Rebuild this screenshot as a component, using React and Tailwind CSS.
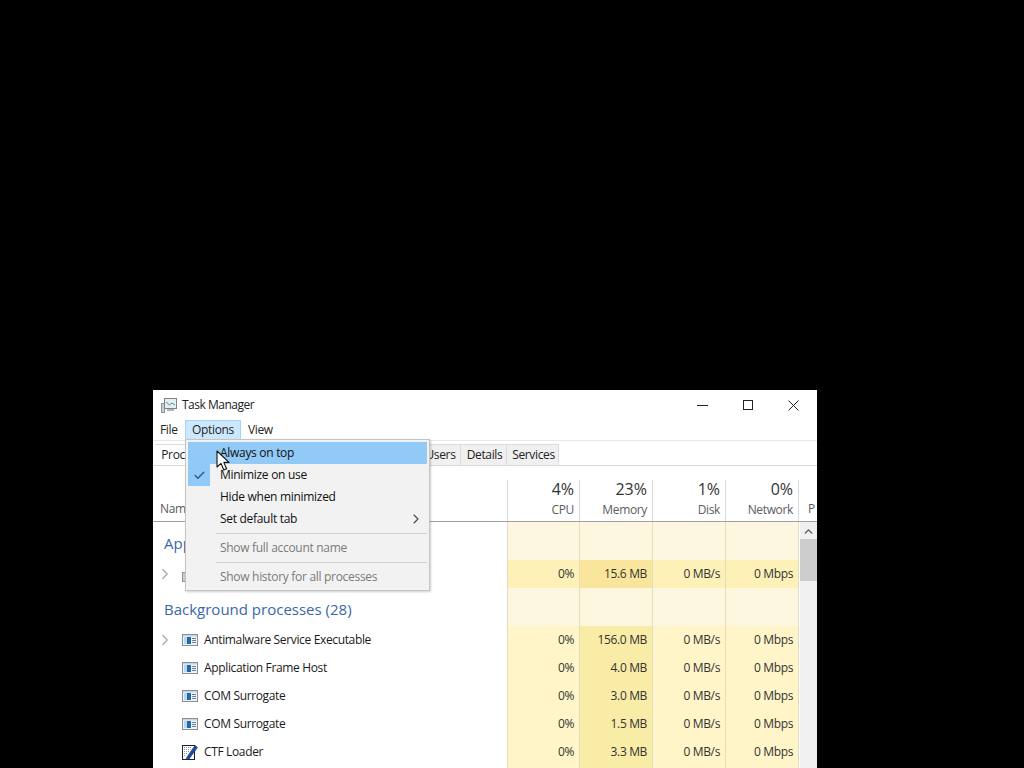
import React from 'react'
import { ChevronRight, ChevronUp, Check } from 'lucide-react'

const font = 'font-["Open_Sans","Noto_Sans",sans-serif]'

const tabs = [
  { label: 'Processes', width: 'w-[64px]' },
  { label: 'Performance', width: 'w-[78px]' },
  { label: 'App history', width: 'w-[70px]' },
  { label: 'Startup', width: 'w-[52px]' },
  { label: 'Users', width: 'w-[42px]' },
  { label: 'Details', width: 'w-[46px]' },
  { label: 'Services', width: 'w-[52px]' },
]

const columns = [
  { pct: '4%', name: 'CPU' },
  { pct: '23%', name: 'Memory' },
  { pct: '1%', name: 'Disk' },
  { pct: '0%', name: 'Network' },
]

const background = [
  { name: 'Antimalware Service Executable', mem: '156.0 MB', expand: true },
  { name: 'Application Frame Host', mem: '4.0 MB' },
  { name: 'COM Surrogate', mem: '3.0 MB' },
  { name: 'COM Surrogate', mem: '1.5 MB' },
  { name: 'CTF Loader', mem: '3.3 MB', icon: 'ctf' },
]

const AppIcon = () => (
  <svg width="16" height="12" viewBox="0 0 16 12" className="shrink-0">
    <rect x="0.5" y="0.5" width="15" height="11" fill="#eef3f8" stroke="#8b8f94" />
    <rect x="1" y="1" width="14" height="1.5" fill="#c7d3df" />
    <rect x="2" y="3" width="3" height="7" fill="#bcd6ec" />
    <rect x="5" y="3" width="4" height="7" fill="#1f6aa8" />
    <path d="M10 4.5h4M10 6.5h4M10 8.5h4" stroke="#6c8198" strokeWidth="1" />
  </svg>
)

const CtfIcon = () => (
  <svg width="16" height="16" viewBox="0 0 16 16" className="shrink-0">
    <rect x="0.5" y="1.5" width="12" height="14" fill="#fff" stroke="#222" />
    <path d="M2 3.5h8M2 5.5h6M2 7.5h5M2 9.5h3M2 11.5h2" stroke="#8a97a8" strokeWidth="1" strokeDasharray="1 1" />
    <path d="M5 13 13 1.5l2.5 2L7 15l-3 .5z" fill="#1d4fa8" stroke="#10275c" strokeWidth="0.6" />
  </svg>
)

const TaskIcon = () => (
  <svg width="16" height="15" viewBox="0 0 16 15" className="shrink-0">
    <rect x="0.5" y="5.5" width="3" height="9" fill="#c9ced3" stroke="#8f9498" />
    <rect x="3.5" y="0.5" width="12" height="10" fill="#e6eef5" stroke="#7c8287" />
    <path d="M5 4l3.5 3L11 5l3 2" fill="none" stroke="#5c8f8a" strokeWidth="1" />
    <rect x="6" y="11" width="7" height="2" fill="#b0b5ba" />
  </svg>
)

const Cursor = () => (
  <svg width="15" height="21" viewBox="0 0 15 21" className="absolute left-[216px] top-[450px]">
    <path d="M1 1v16l4-3.6L7.8 20l2.8-1.3L7.8 12.4H13z" fill="#fff" stroke="#111" strokeWidth="1.1" strokeLinejoin="round" />
  </svg>
)

const WindowButtons = () => (
  <div className="ml-auto flex items-center">
    <svg width="11" height="11" viewBox="0 0 11 11" className="mr-[35px]">
      <path d="M0 5.5h11" stroke="#222" strokeWidth="1" />
    </svg>
    <svg width="10" height="10" viewBox="0 0 10 10" className="mr-[35px]">
      <rect x="0.5" y="0.5" width="9" height="9" fill="none" stroke="#222" strokeWidth="1" />
    </svg>
    <svg width="11" height="11" viewBox="0 0 11 11" className="mr-[18px]">
      <path d="M0.5 0.5l10 10M10.5 0.5l-10 10" stroke="#222" strokeWidth="1" />
    </svg>
  </div>
)

// one row of the process table, the yellow cells are always there
const Row = ({ height = 'h-7', cells, children, memBg = 'bg-[#f9eca6]', bg = 'bg-[#fff5c8]' }) => (
  <div className={`grid grid-cols-[354px_73px_73px_73px_73px] ${height}`}>
    <div className="flex items-center min-w-0">{children}</div>
    {[0, 1, 2, 3].map((i) => (
      <div
        key={i}
        className={`flex items-center justify-end pr-[5px] border-r border-[#e3dcc0] ${i === 1 ? memBg : bg} ${i === 0 ? 'border-l' : ''}`}
      >
        {cells ? cells[i] : ''}
      </div>
    ))}
  </div>
)

const Expander = ({ show }) => (
  <div className="w-[29px] flex justify-start shrink-0 pl-[3px]">
    {show && <ChevronRight size={18} strokeWidth={1.6} className="text-[#a6a6a6]" />}
  </div>
)

const ProcessRow = ({ name, mem, expand, icon }) => (
  <Row cells={['0%', mem, '0 MB/s', '0 Mbps']}>
    <Expander show={expand} />
    {icon === 'ctf' ? <CtfIcon /> : <AppIcon />}
    <span className="ml-[6px] text-[#1a1a1a]">{name}</span>
  </Row>
)

const GroupRow = ({ children }) => (
  <Row height="h-[38px]" bg="bg-[#fdf7e0]" memBg="bg-[#fdf7e0]">
    <span className="pl-[11px] pt-[5px] text-[15px] text-[#3a68a8] tracking-normal">{children}</span>
  </Row>
)

const MenuItem = ({ children, active, checked, arrow, disabled }) => (
  <div className={`h-[22px] flex items-center relative ${active ? 'bg-[#91c9f7]' : ''}`}>
    <div className={`w-[22px] h-[22px] flex items-center justify-center shrink-0 ${checked || active ? 'bg-[#91c9f7]' : ''}`}>
      {checked && <Check size={13} strokeWidth={2.5} className="text-[#1f5c99]" />}
    </div>
    <span className={`ml-[10px] ${disabled ? 'text-[#7a7a7a]' : 'text-[#111]'}`}>{children}</span>
    {arrow && <ChevronRight size={16} strokeWidth={1.6} className="absolute right-[3px] text-[#444]" />}
  </div>
)

const Separator = () => <div className="h-px bg-[#d0d0d0] ml-[28px] my-[3px]" />

const App = () => {
  return (
    <div className={`${font} text-[12px] tracking-[-0.35px] h-screen overflow-hidden bg-black pt-[390px] pl-[153px] relative`}>
      <div className="w-[664px] h-[378px] bg-white overflow-hidden">
        {/* title bar */}
        <div className="h-[30px] flex items-center pl-[8px]">
          <TaskIcon />
          <span className="ml-[5px] text-[#222] tracking-[-0.5px]">Task Manager</span>
          <WindowButtons />
        </div>
        {/* menu bar */}
        <div className="h-[21px] flex items-stretch border-b border-[#e8e8e8] text-[#222]">
          <div className="w-[32px] flex items-center pl-[7px]">File</div>
          <div className="w-[56px] flex items-center justify-center bg-[#cce8ff] border border-[#a8d5f7]">Options</div>
          <div className="flex items-center pl-[7px]">View</div>
        </div>
        {/* tabs */}
        <div className="h-[25px] flex items-end pl-[2px] border-b border-[#d9d9d9] text-[#222]">
          {tabs.map((t, i) => (
            <div
              key={t.label}
              className={`${t.width} h-[21px] flex items-center justify-center pl-[2px] border-r border-t border-[#dcdcdc] ${i === 0 ? 'bg-white' : 'bg-[#f0f0f0]'}`}
            >
              {t.label}
            </div>
          ))}
        </div>
        {/* column headers */}
        <div className="h-[56px] flex border-b border-[#a0a0a0] text-[#5c5c5c]">
          <div className="w-[354px] flex items-end pl-[7px] pb-[3px]">Name</div>
          {columns.map((c, i) => (
            <div
              key={c.name}
              className={`w-[73px] mt-[14px] flex flex-col items-end justify-end pr-[5px] pb-[2px] border-r border-[#d9d9d9] ${i === 0 ? 'border-l' : ''}`}
            >
              <span className="text-[16px] leading-[22px] text-[#333] tracking-normal">{c.pct}</span>
              <span className="leading-[19px]">{c.name}</span>
            </div>
          ))}
          <div className="flex items-end pl-[9px] pb-[3px]">P</div>
        </div>
        {/* process list and scrollbar */}
        <div className="flex">
          <div className="w-[647px] text-[#333] shrink-0">
            <GroupRow>Apps (1)</GroupRow>
            <Row cells={['0%', '15.6 MB', '0 MB/s', '0 Mbps']} bg="bg-[#fdf1b8]" memBg="bg-[#f9e69c]">
              <Expander show />
              <TaskIcon />
              <span className="ml-[6px] text-[#1a1a1a]">Task Manager</span>
            </Row>
            <GroupRow>Background processes (28)</GroupRow>
            {background.map((p, i) => (
              <ProcessRow key={i} {...p} />
            ))}
            <Row />
          </div>
          <div className="w-[17px] bg-[#f0f0f0] flex flex-col items-center">
            <ChevronUp size={13} strokeWidth={2.5} className="text-[#555] mt-[3px] mb-[1px] shrink-0" />
            <div className="w-full h-[42px] bg-[#cdcdcd]" />
          </div>
        </div>
      </div>

      {/* Options dropdown */}
      <div className="absolute left-[185px] top-[439px] w-[245px] h-[152px] bg-[#f2f2f2] border border-[#c4c4c4] p-[2px] tracking-[-0.3px] shadow-[1px_1px_2px_rgba(0,0,0,0.2)]">
        <MenuItem active>Always on top</MenuItem>
        <MenuItem checked>Minimize on use</MenuItem>
        <MenuItem>Hide when minimized</MenuItem>
        <MenuItem arrow>Set default tab</MenuItem>
        <Separator />
        <MenuItem disabled>Show full account name</MenuItem>
        <Separator />
        <MenuItem disabled>Show history for all processes</MenuItem>
      </div>
      <Cursor />
    </div>
  )
}

export default App
